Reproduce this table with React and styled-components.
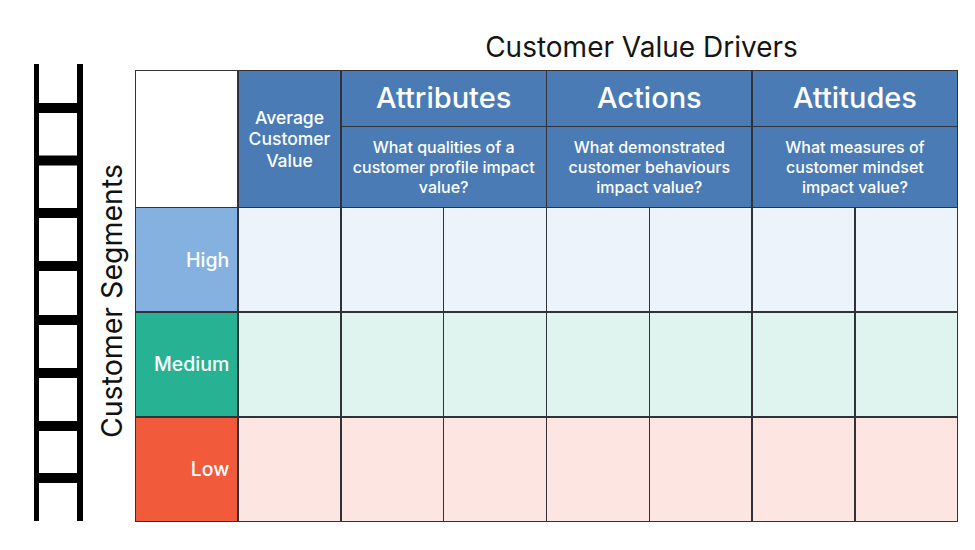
import React from 'react';
import styled, { createGlobalStyle } from 'styled-components';

const GlobalStyle = createGlobalStyle`
  html, body {
    margin: 0;
    padding: 0;
    background: #ffffff;
  }
  body {
    font-family: Inter, 'Liberation Sans', sans-serif;
    color: #1a1a1a;
  }
`;

const TONES = {
  high: { label: '#84b1e0', cell: '#ecf3fb' },
  medium: { label: '#28b294', cell: '#e0f4ef' },
  low: { label: '#f15a3b', cell: '#fde5e1' },
};

const Page = styled.div`
  display: flex;
  align-items: flex-start;
  width: 975px;
  height: 550px;
  overflow: hidden;
`;

const LadderSvg = styled.svg`
  display: block;
  margin: 64px 0 0 34px;
  flex: none;
`;

const SideLabel = styled.div`
  flex: none;
  display: flex;
  align-items: center;
  justify-content: center;
  width: 52px;
  height: 452px;
  margin-top: 70px;
  padding-left: 6px;
  box-sizing: border-box;
`;

const SideText = styled.span`
  writing-mode: vertical-rl;
  transform: rotate(180deg);
  font-size: 28.5px;
  line-height: 1;
  white-space: nowrap;
  color: #111;
  margin-top: 10px;
`;

const Main = styled.div`
  flex: none;
  width: 823px;
`;

const Title = styled.h1`
  margin: 0;
  height: 70px;
  box-sizing: border-box;
  padding: 30px 0 0 190px;
  font-size: 28px;
  line-height: 34px;
  font-weight: 400;
  text-align: center;
  color: #151515;
`;

const Grid = styled.div`
  display: grid;
  grid-template-columns: repeat(8, 1fr);
  grid-template-rows: 54.5px 79.5px repeat(3, 1fr);
  gap: 1.5px;
  width: 823px;
  height: 452px;
  box-sizing: border-box;
  border: 1.5px solid #333;
  background: #2f3238;
`;

const Corner = styled.div`
  grid-column: 1;
  grid-row: 1 / span 2;
  background: #ffffff;
`;

const HeadCell = styled.div`
  grid-column: ${({ $col, $span = 1 }) => `${$col} / span ${$span}`};
  grid-row: ${({ $row, $rows = 1 }) => `${$row} / span ${$rows}`};
  display: flex;
  align-items: center;
  justify-content: center;
  text-align: center;
  background: #4a7bb5;
  color: #ffffff;
  font-size: ${({ $size }) => $size}px;
  line-height: ${({ $lh }) => $lh}px;
  font-weight: 500;
  padding: 0 8px;
`;

const RowLabel = styled.div`
  display: flex;
  align-items: center;
  justify-content: flex-end;
  padding-right: 8px;
  background: ${({ $tone }) => TONES[$tone].label};
  color: #ffffff;
  font-size: 19.5px;
  font-weight: 500;
`;

const Cell = styled.div`
  background: ${({ $tone }) => TONES[$tone].cell};
`;

const groups = [
  { title: 'Attributes', question: 'What qualities of a customer profile impact value?', col: 3 },
  { title: 'Actions', question: 'What demonstrated customer behaviours impact value?', col: 5 },
  { title: 'Attitudes', question: 'What measures of customer mindset impact value?', col: 7 },
];

const segments = [
  { name: 'High', tone: 'high' },
  { name: 'Medium', tone: 'medium' },
  { name: 'Low', tone: 'low' },
];

const rungs = [39, 91.5, 144, 197, 251, 304, 357, 409];

function Ladder() {
  return (
    <LadderSvg width="49" height="457" viewBox="0 0 49 457">
      <rect x="0" y="0" width="5" height="457" fill="#000" />
      <rect x="43" y="0" width="6" height="457" fill="#000" />
      {rungs.map((y) => (
        <rect key={y} x="0" y={y} width="49" height="10" fill="#000" />
      ))}
    </LadderSvg>
  );
}

function App() {
  return (
    <>
      <GlobalStyle />
      <Page>
        <Ladder />
        <SideLabel>
          <SideText>Customer Segments</SideText>
        </SideLabel>
        <Main>
          <Title>Customer Value Drivers</Title>
          <Grid>
            <Corner />
            <HeadCell $col={2} $row={1} $rows={2} $size={17.5} $lh={21.5}>
              Average Customer Value
            </HeadCell>
            {groups.map(({ title, col }) => (
              <HeadCell key={title} $col={col} $span={2} $row={1} $size={29} $lh={32}>
                {title}
              </HeadCell>
            ))}
            {groups.map(({ title, question, col }) => (
              <HeadCell key={`${title}-q`} $col={col} $span={2} $row={2} $size={16} $lh={20}>
                {question}
              </HeadCell>
            ))}
            {segments.map(({ name, tone }) => (
              <React.Fragment key={name}>
                <RowLabel $tone={tone}>{name}</RowLabel>
                {Array.from({ length: 7 }).map((_, i) => (
                  <Cell key={`${name}-${i}`} $tone={tone} />
                ))}
              </React.Fragment>
            ))}
          </Grid>
        </Main>
      </Page>
    </>
  );
}

export default App;
